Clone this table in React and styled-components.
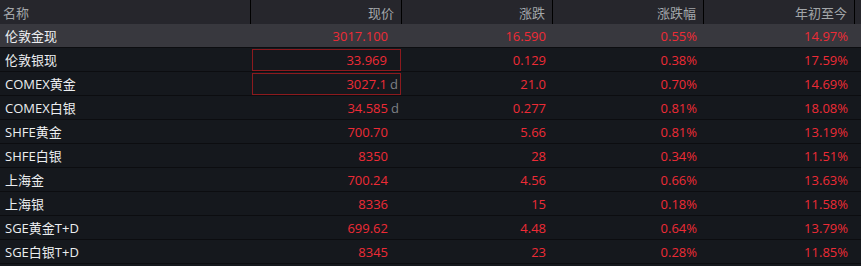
import React from 'react';
import styled, { createGlobalStyle } from 'styled-components';

const GlobalStyle = createGlobalStyle`
  html, body {
    margin: 0;
    padding: 0;
    background: #15181d;
  }
  body {
    font-family: "Open Sans", "Noto Sans CJK SC", sans-serif;
    font-size: 13px;
  }
`;

const cols = '251px 151px 151px 151px 151px 1fr';

const Board = styled.div`
  width: 861px;
  height: 266px;
  background: #15181d;
  overflow: hidden;
`;

const HeaderRow = styled.div`
  display: grid;
  grid-template-columns: ${cols};
  height: 24px;
  background: #26262c;
  color: #a3a6aa;
`;

const HeadCell = styled.div`
  display: flex;
  align-items: center;
  justify-content: ${(p) => (p.$left ? 'flex-start' : 'flex-end')};
  padding: ${(p) => (p.$left ? '0 0 0 3px' : p.$suffix ? '0 7px 0 0' : '0 7px 0 0')};
  border-right: ${(p) => (p.$last ? 'none' : '1px solid #000')};
`;

const Row = styled.div`
  display: grid;
  grid-template-columns: ${cols};
  height: 23px;
  border-bottom: 1px solid #0c0d10;
  background: ${(p) => (p.$active ? '#38383e' : '#15181d')};
`;

const NameCell = styled.div`
  display: flex;
  align-items: center;
  padding-left: 5px;
  color: #eceef0;
`;

const NumCell = styled.div`
  position: relative;
  display: flex;
  align-items: center;
  justify-content: flex-end;
  padding-right: 7px;
  color: #ee2b36;
`;

const PriceCell = styled(NumCell)`
  padding-right: 3px;
  margin: ${(p) => (p.$boxed ? '1px 1px 0 1px' : '0')};
  border: ${(p) => (p.$boxed ? '1px solid #8c1a1e' : 'none')};
  padding-right: ${(p) => (p.$boxed ? '2px' : '3px')};
`;

const Suffix = styled.span`
  display: inline-block;
  width: 11px;
  padding-left: 3px;
  box-sizing: border-box;
  color: #7d8085;
`;

const rows = [
  { name: '伦敦金现', price: '3017.100', chg: '16.590', pct: '0.55%', ytd: '14.97%', active: true },
  { name: '伦敦银现', price: '33.969', chg: '0.129', pct: '0.38%', ytd: '17.59%', boxed: true },
  { name: 'COMEX黄金', price: '3027.1', d: true, chg: '21.0', pct: '0.70%', ytd: '14.69%', boxed: true },
  { name: 'COMEX白银', price: '34.585', d: true, chg: '0.277', pct: '0.81%', ytd: '18.08%' },
  { name: 'SHFE黄金', price: '700.70', chg: '5.66', pct: '0.81%', ytd: '13.19%' },
  { name: 'SHFE白银', price: '8350', chg: '28', pct: '0.34%', ytd: '11.51%' },
  { name: '上海金', price: '700.24', chg: '4.56', pct: '0.66%', ytd: '13.63%' },
  { name: '上海银', price: '8336', chg: '15', pct: '0.18%', ytd: '11.58%' },
  { name: 'SGE黄金T+D', price: '699.62', chg: '4.48', pct: '0.64%', ytd: '13.79%' },
  { name: 'SGE白银T+D', price: '8345', chg: '23', pct: '0.28%', ytd: '11.85%' },
];

export default function App() {
  return (
    <Board>
      <GlobalStyle />
      <HeaderRow>
        <HeadCell $left>名称</HeadCell>
        <HeadCell>现价</HeadCell>
        <HeadCell>涨跌</HeadCell>
        <HeadCell>涨跌幅</HeadCell>
        <HeadCell>年初至今</HeadCell>
        <HeadCell $last />
      </HeaderRow>
      {rows.map((r) => (
        <Row key={r.name} $active={r.active}>
          <NameCell>{r.name}</NameCell>
          <PriceCell $boxed={r.boxed}>
            {r.price}
            <Suffix>{r.d ? 'd' : ''}</Suffix>
          </PriceCell>
          <NumCell>{r.chg}</NumCell>
          <NumCell>{r.pct}</NumCell>
          <NumCell>{r.ytd}</NumCell>
          <div />
        </Row>
      ))}
    </Board>
  );
}
